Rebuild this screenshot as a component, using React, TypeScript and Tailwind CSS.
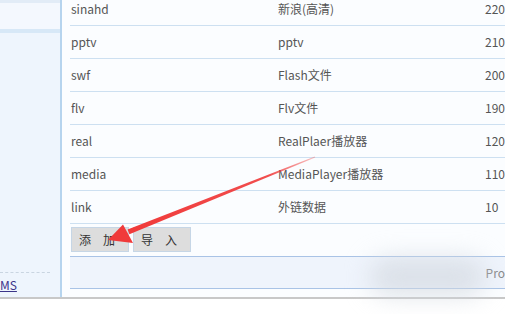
import React from "react";

const rows = [
  { code: "sinahd", name: "新浪(高清)", sort: "220" },
  { code: "pptv", name: "pptv", sort: "210" },
  { code: "swf", name: "Flash文件", sort: "200" },
  { code: "flv", name: "Flv文件", sort: "190" },
  { code: "real", name: "RealPlaer播放器", sort: "120" },
  { code: "media", name: "MediaPlayer播放器", sort: "110" },
  { code: "link", name: "外链数据", sort: "10" },
];

const App = () => {
  return (
    <div
      className="relative w-[505px] h-[314px] overflow-hidden bg-white text-[12px]"
      style={{ fontFamily: '"Noto Sans CJK SC", "Noto Sans", sans-serif' }}
    >
      <div className="flex h-[297px]">
        {/* Sidebar */}
        <div className="w-[60px] flex flex-col bg-[#eef5fd]">
          <div className="h-[3px] bg-[#e2ecf7]"></div>
          <div className="h-[26px] bg-[#f4f8fe]"></div>
          <div className="h-[4px] bg-[#d7e8f7]"></div>
          <div className="flex-1"></div>
          <div className="w-[50px] border-t border-dashed border-[#c9d5e1]"></div>
          <div className="h-[24px] pt-[5px] leading-[14px]">
            <a href="#" className="text-[#3b3489] underline">
              MS
            </a>
          </div>
        </div>
        <div className="w-[2px] bg-[#b6d4ee]"></div>

        {/* Main */}
        <div className="flex-1 bg-[#fbfdff] pl-[8px] flex flex-col">
          <div className="-mt-[7px]">
            {rows.map((r) => (
              <div
                key={r.code}
                className="flex h-[33px] items-center border-b border-[#cde0f1] text-[#555]"
              >
                <div className="w-[208px] pl-[1px]">{r.code}</div>
                <div className="w-[207px]">{r.name}</div>
                <div className="flex-1 whitespace-nowrap">{r.sort}</div>
              </div>
            ))}
          </div>

          <div className="flex gap-[4px] mt-[3px] pl-[1px]">
            <button className="w-[58px] h-[25px] bg-[#dddddd] border border-[#c6d6e6] text-left pl-[7px] text-[#333] text-[12px]">
              添　加
            </button>
            <button className="w-[58px] h-[25px] bg-[#dddddd] border border-[#c6d6e6] text-left pl-[7px] text-[#333] text-[12px]">
              导　入
            </button>
          </div>

          <div className="mt-[4px] h-[33px] bg-[#eff4fc] border-y border-[#a9c3e6] flex items-center justify-end">
            <span className="text-[#888] whitespace-nowrap">Pro</span>
          </div>
        </div>
      </div>
      <div className="h-[2px] bg-[#c8c8c8]"></div>

      {/* blurred smudge */}
      <div className="absolute left-[370px] top-[258px] w-[115px] h-[38px] rounded-full bg-[#d3d8e0]/70 blur-md"></div>

      {/* red arrow */}
      <svg
        className="absolute left-0 top-0 pointer-events-none"
        width="505"
        height="314"
        viewBox="0 0 505 314"
      >
        <defs>
          <linearGradient id="fade" x1="315" y1="157" x2="128" y2="232" gradientUnits="userSpaceOnUse">
            <stop offset="0" stopColor="#f03a3a" stopOpacity="0.3" />
            <stop offset="0.25" stopColor="#f03a3a" stopOpacity="0.9" />
            <stop offset="1" stopColor="#f03a3a" />
          </linearGradient>
        </defs>
        <polygon
          points="315.2,157.6 314.8,156.4 127.6,229.4 129.4,234.2"
          fill="url(#fade)"
        />
        <polygon points="108,240 123,224.5 133,243" fill="#f03a3a" />
      </svg>
    </div>
  );
};

export default App;
